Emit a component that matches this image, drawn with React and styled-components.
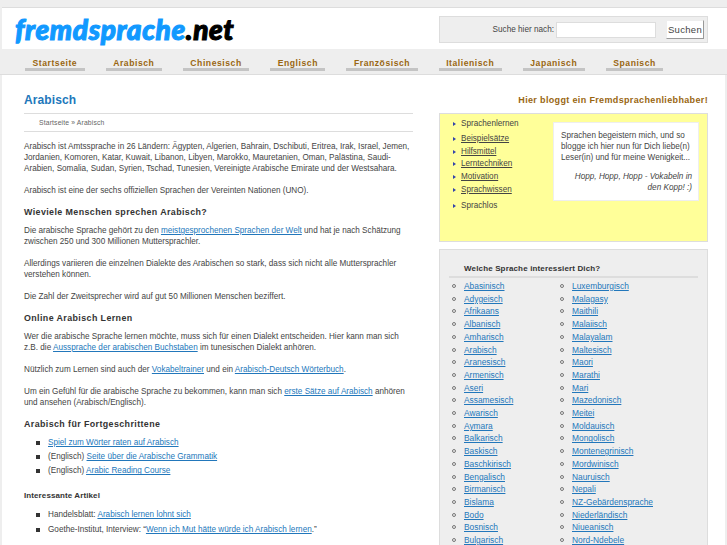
import React from 'react'
import styled, { createGlobalStyle } from 'styled-components'

const GlobalStyle = createGlobalStyle`
  html, body {
    margin: 0;
    padding: 0;
    height: 545px;
    overflow: hidden;
    background: #eeeeee;
    font-family: "Liberation Sans", Arial, sans-serif;
  }
`
const Page = styled.div`
  width: 727px;
  height: 545px;
  padding-top: 7px;
  box-sizing: border-box;
  overflow: hidden;
`
const Header = styled.header`
  display: flex;
  justify-content: space-between;
  align-items: flex-start;
  height: 42px;
  box-sizing: border-box;
  margin-left: 2px;
  padding: 8px 19px 0 13px;
  background: #fff;
  border-top: 1px solid #dddddd;
`
const Logo = styled.div`
  font-family: "Lato", "DejaVu Sans", sans-serif;
  font-weight: 900;
  font-style: italic;
  font-size: 28px;
  line-height: 27px;
  letter-spacing: 0.65px;
  color: #1199ff;
  -webkit-text-stroke: 1.1px currentColor;
  span { color: #000; }
`
const Search = styled.form`
  display: flex;
  align-items: center;
  justify-content: flex-end;
  width: 269px;
  height: 27px;
  box-sizing: border-box;
  padding-right: 3px;
  background: #eeeeee;
  border: 1px solid #dddddd;
  font-size: 8.2px;
  color: #444;
`
const SearchInput = styled.input`
  width: 100px;
  height: 16px;
  box-sizing: border-box;
  margin: 0 10px 0 2px;
  padding: 0;
  background: #fff;
  border: 1px solid #dddddd;
`
const SearchButton = styled.button`
  width: 38px;
  height: 19px;
  padding: 0;
  background: #fff;
  border: 1px solid;
  border-color: #eee #999 #999 #eee;
  font-family: inherit;
  font-size: 9.5px;
  letter-spacing: 0.3px;
  color: #444;
`
const Nav = styled.nav`
  display: flex;
  gap: 21px;
  height: 26px;
  padding: 8px 0 0 25px;
  box-sizing: border-box;
  border-bottom: 1px solid #dddddd;
`
const NavItem = styled.a`
  display: block;
  height: 11px;
  padding: 0 7.5px;
  border-bottom: 3px solid #c4c4c4;
  font-size: 8.6px;
  font-weight: 700;
  line-height: 12px;
  letter-spacing: 0.55px;
  color: #996611;
`
const Content = styled.main`
  display: grid;
  grid-template-columns: 389px 269px;
  column-gap: 26px;
  height: 470px;
  margin: 0 2px;
  padding: 18px 0 0 22px;
  box-sizing: border-box;
  background: #fff;
`
const Article = styled.article`
  font-size: 8.16px;
  line-height: 11px;
  color: #444;
  p { margin: 0 0 11px; }
`
const Title = styled.h1`
  margin: 0;
  height: 20px;
  font-size: 12px;
  line-height: 14px;
  color: #2277bb;
  letter-spacing: 0.1px;
`
const Crumbs = styled.div`
  height: 17px;
  margin-bottom: 9px;
  padding-left: 15px;
  border-top: 1px solid #dddddd;
  border-bottom: 1px solid #dddddd;
  font-size: 6.8px;
  line-height: 17px;
  letter-spacing: 0.15px;
  color: #666;
`
const Heading = styled.h2`
  margin: -1.5px 0 7.5px;
  font-size: 8.9px;
  line-height: 12px;
  letter-spacing: 0.4px;
  color: #333;
`
const SmallHeading = styled.h3`
  margin: 14px 0 8px;
  font-size: 8px;
  line-height: 11px;
  letter-spacing: 0.1px;
  color: #333;
`
const TextLink = styled.a`
  color: #2277bb;
  text-decoration: underline;
`
const SquareList = styled.ul`
  margin: 0;
  padding: 0 0 0 24px;
  list-style: none;
`
const SquareItem = styled.li`
  position: relative;
  margin-bottom: 3.2px;
  &::before {
    content: '';
    position: absolute;
    left: -12px;
    top: 4px;
    width: 4px;
    height: 4px;
    background: #333;
  }
`
const Aside = styled.aside`
  display: flex;
  flex-direction: column;
`
const BlogTitle = styled.div`
  height: 14px;
  margin-bottom: 6px;
  text-align: right;
  font-size: 9px;
  font-weight: 700;
  line-height: 14px;
  letter-spacing: 0.35px;
  color: #996611;
`
const YellowBox = styled.section`
  display: flex;
  justify-content: space-between;
  height: 129px;
  box-sizing: border-box;
  margin-bottom: 7px;
  padding: 3px 8px 0 0;
  background: #ffff99;
  border: 1px solid #dddddd;
`
const BlogNav = styled.ul`
  margin: 0;
  padding: 1px 0 0 21px;
  list-style: none;
  font-size: 8.16px;
  line-height: 12.7px;
  color: #444;
`
const BlogItem = styled.li`
  position: relative;
  margin-bottom: ${(p) => p.$gap || 0}px;
  &::before {
    content: '';
    position: absolute;
    left: -8px;
    top: 4px;
    border-left: 3px solid #3344aa;
    border-top: 2.5px solid transparent;
    border-bottom: 2.5px solid transparent;
  }
  a { color: #444; text-decoration: underline; }
`
const Note = styled.div`
  width: 146px;
  height: 79px;
  box-sizing: border-box;
  margin-top: 5px;
  padding: 7px 6px 0 7px;
  background: #fff;
  border: 1px solid #eeeeee;
  font-size: 8.16px;
  line-height: 11px;
  color: #444;
  p { margin: 0 0 8px; }
`
const NoteQuote = styled.p`
  text-align: right;
  font-style: italic;
`
const LanguageBox = styled.section`
  flex: 1;
  padding: 13px 9px 0;
  background: #eeeeee;
  border: 1px solid #dddddd;
`
const LanguageTitle = styled.div`
  height: 13px;
  padding-left: 15px;
  border-bottom: 2px solid #dddddd;
  font-size: 8px;
  font-weight: 700;
  line-height: 11px;
  letter-spacing: 0.15px;
  color: #333;
`
const LanguageGrid = styled.div`
  display: grid;
  grid-template-columns: 108px 1fr;
  margin-top: 2px;
`
const LanguageList = styled.ul`
  margin: 0;
  padding: 0 0 0 15px;
  list-style: none;
  font-size: 8.4px;
  line-height: 12.7px;
`
const LanguageItem = styled.li`
  position: relative;
  &::before {
    content: '';
    position: absolute;
    left: -12px;
    top: 4px;
    width: 2px;
    height: 2px;
    border: 1px solid #777;
    border-radius: 50%;
  }
`

const navItems = ['Startseite', 'Arabisch', 'Chinesisch', 'Englisch', 'Französisch', 'Italienisch', 'Japanisch', 'Spanisch']
const columnOne = [
  'Abasinisch', 'Adygeisch', 'Afrikaans', 'Albanisch', 'Amharisch', 'Arabisch', 'Aranesisch',
  'Armenisch', 'Aseri', 'Assamesisch', 'Awarisch', 'Aymara', 'Balkarisch', 'Baskisch',
  'Baschkirisch', 'Bengalisch', 'Birmanisch', 'Bislama', 'Bodo', 'Bosnisch', 'Bulgarisch',
]
const columnTwo = [
  'Luxemburgisch', 'Malagasy', 'Maithili', 'Malaiisch', 'Malayalam', 'Maltesisch', 'Maori',
  'Marathi', 'Mari', 'Mazedonisch', 'Meitei', 'Moldauisch', 'Mongolisch', 'Montenegrinisch',
  'Mordwinisch', 'Nauruisch', 'Nepali', 'NZ-Gebärdensprache', 'Niederländisch', 'Niueanisch',
  'Nord-Ndebele',
]

const App = () => (
  <Page>
    <GlobalStyle />
    <Header>
      <Logo>fremdsprache<span>.net</span></Logo>
      <Search onSubmit={(e) => e.preventDefault()}>
        Suche hier nach:
        <SearchInput />
        <SearchButton>Suchen</SearchButton>
      </Search>
    </Header>
    <Nav>
      {navItems.map((label) => (
        <NavItem key={label}>{label}</NavItem>
      ))}
    </Nav>
    <Content>
      <Article>
        <Title>Arabisch</Title>
        <Crumbs>Startseite » Arabisch</Crumbs>
        <p>
          Arabisch ist Amtssprache in 26 Ländern: Ägypten, Algerien, Bahrain, Dschibuti, Eritrea, Irak, Israel, Jemen,
          Jordanien, Komoren, Katar, Kuwait, Libanon, Libyen, Marokko, Mauretanien, Oman, Palästina, Saudi-
          Arabien, Somalia, Sudan, Syrien, Tschad, Tunesien, Vereinigte Arabische Emirate und der Westsahara.
        </p>
        <p>Arabisch ist eine der sechs offiziellen Sprachen der Vereinten Nationen (UNO).</p>
        <Heading>Wieviele Menschen sprechen Arabisch?</Heading>
        <p>
          Die arabische Sprache gehört zu den <TextLink>meistgesprochenen Sprachen der Welt</TextLink> und hat je nach Schätzung
          zwischen 250 und 300 Millionen Muttersprachler.
        </p>
        <p>
          Allerdings variieren die einzelnen Dialekte des Arabischen so stark, dass sich nicht alle Muttersprachler
          verstehen können.
        </p>
        <p>Die Zahl der Zweitsprecher wird auf gut 50 Millionen Menschen beziffert.</p>
        <Heading>Online Arabisch Lernen</Heading>
        <p>
          Wer die arabische Sprache lernen möchte, muss sich für einen Dialekt entscheiden. Hier kann man sich
          z.B. die <TextLink>Aussprache der arabischen Buchstaben</TextLink> im tunesischen Dialekt anhören.
        </p>
        <p>
          Nützlich zum Lernen sind auch der <TextLink>Vokabeltrainer</TextLink> und ein <TextLink>Arabisch-Deutsch Wörterbuch</TextLink>.
        </p>
        <p>
          Um ein Gefühl für die arabische Sprache zu bekommen, kann man sich <TextLink>erste Sätze auf Arabisch</TextLink> anhören
          und ansehen (Arabisch/Englisch).
        </p>
        <Heading>Arabisch für Fortgeschrittene</Heading>
        <SquareList>
          <SquareItem><TextLink>Spiel zum Wörter raten auf Arabisch</TextLink></SquareItem>
          <SquareItem>(Englisch) <TextLink>Seite über die Arabische Grammatik</TextLink></SquareItem>
          <SquareItem>(Englisch) <TextLink>Arabic Reading Course</TextLink></SquareItem>
        </SquareList>
        <SmallHeading>Interessante Artikel</SmallHeading>
        <SquareList>
          <SquareItem>Handelsblatt: <TextLink>Arabisch lernen lohnt sich</TextLink></SquareItem>
          <SquareItem>Goethe-Institut, Interview: “<TextLink>Wenn ich Mut hätte würde ich Arabisch lernen</TextLink>.”</SquareItem>
        </SquareList>
      </Article>
      <Aside>
        <BlogTitle>Hier bloggt ein Fremdsprachenliebhaber!</BlogTitle>
        <YellowBox>
          <BlogNav>
            <BlogItem $gap={2.3}>Sprachenlernen</BlogItem>
            <BlogItem><a>Beispielsätze</a></BlogItem>
            <BlogItem><a>Hilfsmittel</a></BlogItem>
            <BlogItem><a>Lerntechniken</a></BlogItem>
            <BlogItem><a>Motivation</a></BlogItem>
            <BlogItem $gap={3.6}><a>Sprachwissen</a></BlogItem>
            <BlogItem>Sprachlos</BlogItem>
          </BlogNav>
          <Note>
            <p>Sprachen begeistern mich, und so blogge ich hier nun für Dich liebe(n) Leser(in) und für meine Wenigkeit...</p>
            <NoteQuote>Hopp, Hopp, Hopp - Vokabeln in den Kopp! :)</NoteQuote>
          </Note>
        </YellowBox>
        <LanguageBox>
          <LanguageTitle>Welche Sprache interessiert Dich?</LanguageTitle>
          <LanguageGrid>
            <LanguageList>
              {columnOne.map((name) => (
                <LanguageItem key={name}><TextLink>{name}</TextLink></LanguageItem>
              ))}
            </LanguageList>
            <LanguageList>
              {columnTwo.map((name) => (
                <LanguageItem key={name}><TextLink>{name}</TextLink></LanguageItem>
              ))}
            </LanguageList>
          </LanguageGrid>
        </LanguageBox>
      </Aside>
    </Content>
  </Page>
)

export default App
